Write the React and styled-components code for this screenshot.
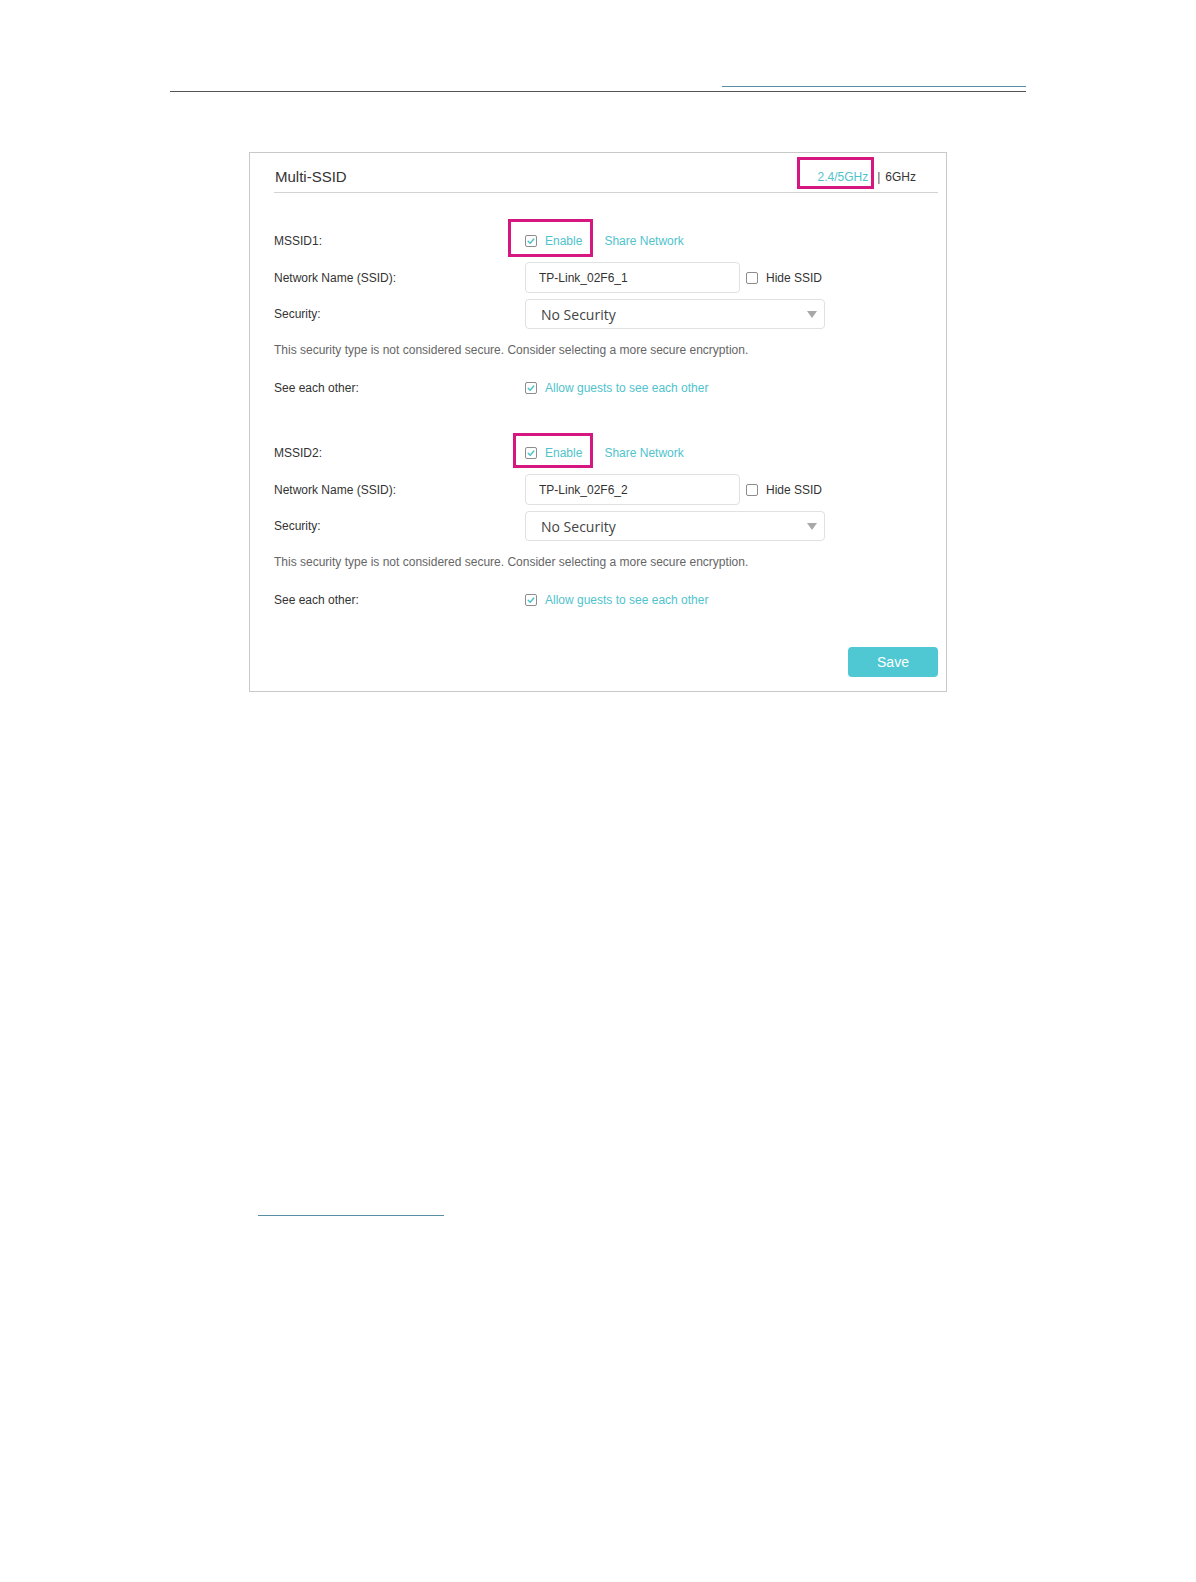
import styled, { createGlobalStyle } from "styled-components";

const GlobalStyle = createGlobalStyle`
  html, body {
    margin: 0;
    padding: 0;
    background: #fff;
  }
  body {
    font-family: "Liberation Sans", Arial, sans-serif;
  }
`;

const TEAL = "#4fc3cc";

const Page = styled.div`
  width: 1196px;
  min-height: 1582px;
  padding-top: 86px;
  box-sizing: border-box;
`;

const TopRule = styled.div`
  margin-left: 170px;
  width: 856px;
  display: flex;
  flex-direction: column;
  align-items: flex-end;
  gap: 4px;
`;

const BlueLine = styled.div`
  width: ${(p) => p.$w}px;
  height: 1px;
  background: #5a8ea4;
`;

const GrayLine = styled.div`
  width: 100%;
  height: 1px;
  background: #555;
`;

const FootLine = styled(BlueLine)`
  margin: 523px 0 0 258px;
`;

const Card = styled.div`
  margin: 60px 0 0 249px;
  width: 698px;
  box-sizing: border-box;
  border: 1px solid #c9c9c9;
  padding: 0 8px 14px 24px;
`;

const CardHeader = styled.div`
  height: 40px;
  box-sizing: border-box;
  border-bottom: 1px solid #d3d3d3;
  display: flex;
  align-items: flex-end;
  justify-content: space-between;
  padding: 0 22px 6px 1px;
`;

const Title = styled.div`
  font-size: 15px;
  line-height: 18px;
  color: #333;
`;

const Tabs = styled.div`
  display: flex;
  align-items: flex-end;
  margin-bottom: 2px;
  font-size: 12px;
  line-height: 14px;
  color: #333;
`;

const Tab = styled.span`
  position: relative;
  color: ${(p) => (p.$active ? TEAL : "#333")};
`;

const Sep = styled.span`
  margin: 0 5px 0 9px;
  color: #555;
`;

const Highlight = styled.span`
  position: absolute;
  top: ${(p) => p.$t}px;
  bottom: ${(p) => p.$b}px;
  left: ${(p) => p.$l}px;
  right: ${(p) => p.$r}px;
  border: 3px solid #d5177f;
  pointer-events: none;
`;

const Body = styled.div`
  padding-top: 33px;
  display: flex;
  flex-direction: column;
`;

const Row = styled.div`
  display: grid;
  grid-template-columns: 251px 1fr;
  align-items: center;
  height: ${(p) => p.$h}px;
  margin-top: ${(p) => p.$mt || 0}px;
`;

const Label = styled.div`
  font-size: 12px;
  line-height: 14px;
  color: #333;
`;

const Value = styled.div`
  display: flex;
  align-items: center;
`;

const Note = styled.div`
  height: 20px;
  margin-top: 11px;
  display: flex;
  align-items: center;
  font-size: 12px;
  color: #666;
`;

const CheckItem = styled.label`
  position: relative;
  display: inline-flex;
  align-items: center;
  gap: 8px;
  font-size: 12px;
  line-height: 14px;
  color: ${(p) => (p.$plain ? "#333" : TEAL)};
  margin-left: ${(p) => p.$ml || 0}px;
`;

const Box = styled.span`
  width: 12px;
  height: 12px;
  box-sizing: border-box;
  border: 1px solid #8d8d8d;
  border-radius: 2px;
  display: inline-flex;
  align-items: center;
  justify-content: center;
  background: #fff;
`;

const Link = styled.span`
  margin-left: 22px;
  font-size: 12px;
  color: ${TEAL};
`;

const TextInput = styled.input`
  width: 215px;
  height: 31px;
  box-sizing: border-box;
  border: 1px solid #e1e1e1;
  border-radius: 4px;
  padding: 0 0 0 13px;
  font-family: "Liberation Sans", Arial, sans-serif;
  font-size: 12px;
  color: #333;
  outline: none;
`;

const Select = styled.div`
  width: 300px;
  height: 30px;
  box-sizing: border-box;
  border: 1px solid #e1e1e1;
  border-radius: 4px;
  padding: 0 7px 0 15px;
  display: flex;
  align-items: center;
  justify-content: space-between;
  font-family: "Open Sans", "Liberation Sans", sans-serif;
  font-size: 14px;
  color: #444;
`;

const Arrow = styled.span`
  width: 0;
  height: 0;
  border-left: 5px solid transparent;
  border-right: 5px solid transparent;
  border-top: 7px solid #a8a8a8;
`;

const Actions = styled.div`
  margin-top: 37px;
  display: flex;
  justify-content: flex-end;
`;

const SaveButton = styled.button`
  width: 90px;
  height: 30px;
  border: none;
  border-radius: 4px;
  background: #4fc8d3;
  color: #fff;
  font-family: "Liberation Sans", Arial, sans-serif;
  font-size: 14px;
  padding: 0;
`;

function Checkbox({ checked }) {
  return (
    <Box>
      {checked && (
        <svg width="10" height="10" viewBox="0 0 10 10">
          <polyline
            points="2.2,5.2 4.2,7.2 7.8,3"
            fill="none"
            stroke={TEAL}
            strokeWidth="1.5"
            strokeLinecap="round"
            strokeLinejoin="round"
          />
        </svg>
      )}
    </Box>
  );
}

const sections = [
  { id: "MSSID1", ssid: "TP-Link_02F6_1", mt: 0, mark: { t: -15, b: -9, l: -17, r: -11 } },
  { id: "MSSID2", ssid: "TP-Link_02F6_2", mt: 40, mark: { t: -13, b: -8, l: -12, r: -11 } },
];

export default function App() {
  return (
    <Page>
      <GlobalStyle />
      <TopRule>
        <BlueLine $w={304} />
        <GrayLine />
      </TopRule>

      <Card>
        <CardHeader>
          <Title>Multi-SSID</Title>
          <Tabs>
            <Tab $active>
              2.4/5GHz
              <Highlight $t={-13} $b={-5} $l={-20} $r={-6} />
            </Tab>
            <Sep>|</Sep>
            <Tab>6GHz</Tab>
          </Tabs>
        </CardHeader>

        <Body>
          {sections.map((s) => (
            <div key={s.id}>
              <Row $h={30} $mt={s.mt}>
                <Label>{s.id}:</Label>
                <Value>
                  <CheckItem>
                    <Checkbox checked />
                    Enable
                    <Highlight $t={s.mark.t} $b={s.mark.b} $l={s.mark.l} $r={s.mark.r} />
                  </CheckItem>
                  <Link>Share Network</Link>
                </Value>
              </Row>
              <Row $h={31} $mt={6}>
                <Label>Network Name (SSID):</Label>
                <Value>
                  <TextInput defaultValue={s.ssid} readOnly />
                  <CheckItem $plain $ml={6}>
                    <Checkbox />
                    Hide SSID
                  </CheckItem>
                </Value>
              </Row>
              <Row $h={30} $mt={6}>
                <Label>Security:</Label>
                <Value>
                  <Select>
                    No Security
                    <Arrow />
                  </Select>
                </Value>
              </Row>
              <Note>
                This security type is not considered secure. Consider selecting a more secure encryption.
              </Note>
              <Row $h={20} $mt={18}>
                <Label>See each other:</Label>
                <Value>
                  <CheckItem>
                    <Checkbox checked />
                    Allow guests to see each other
                  </CheckItem>
                </Value>
              </Row>
            </div>
          ))}

          <Actions>
            <SaveButton>Save</SaveButton>
          </Actions>
        </Body>
      </Card>

      <FootLine $w={186} />
    </Page>
  );
}
